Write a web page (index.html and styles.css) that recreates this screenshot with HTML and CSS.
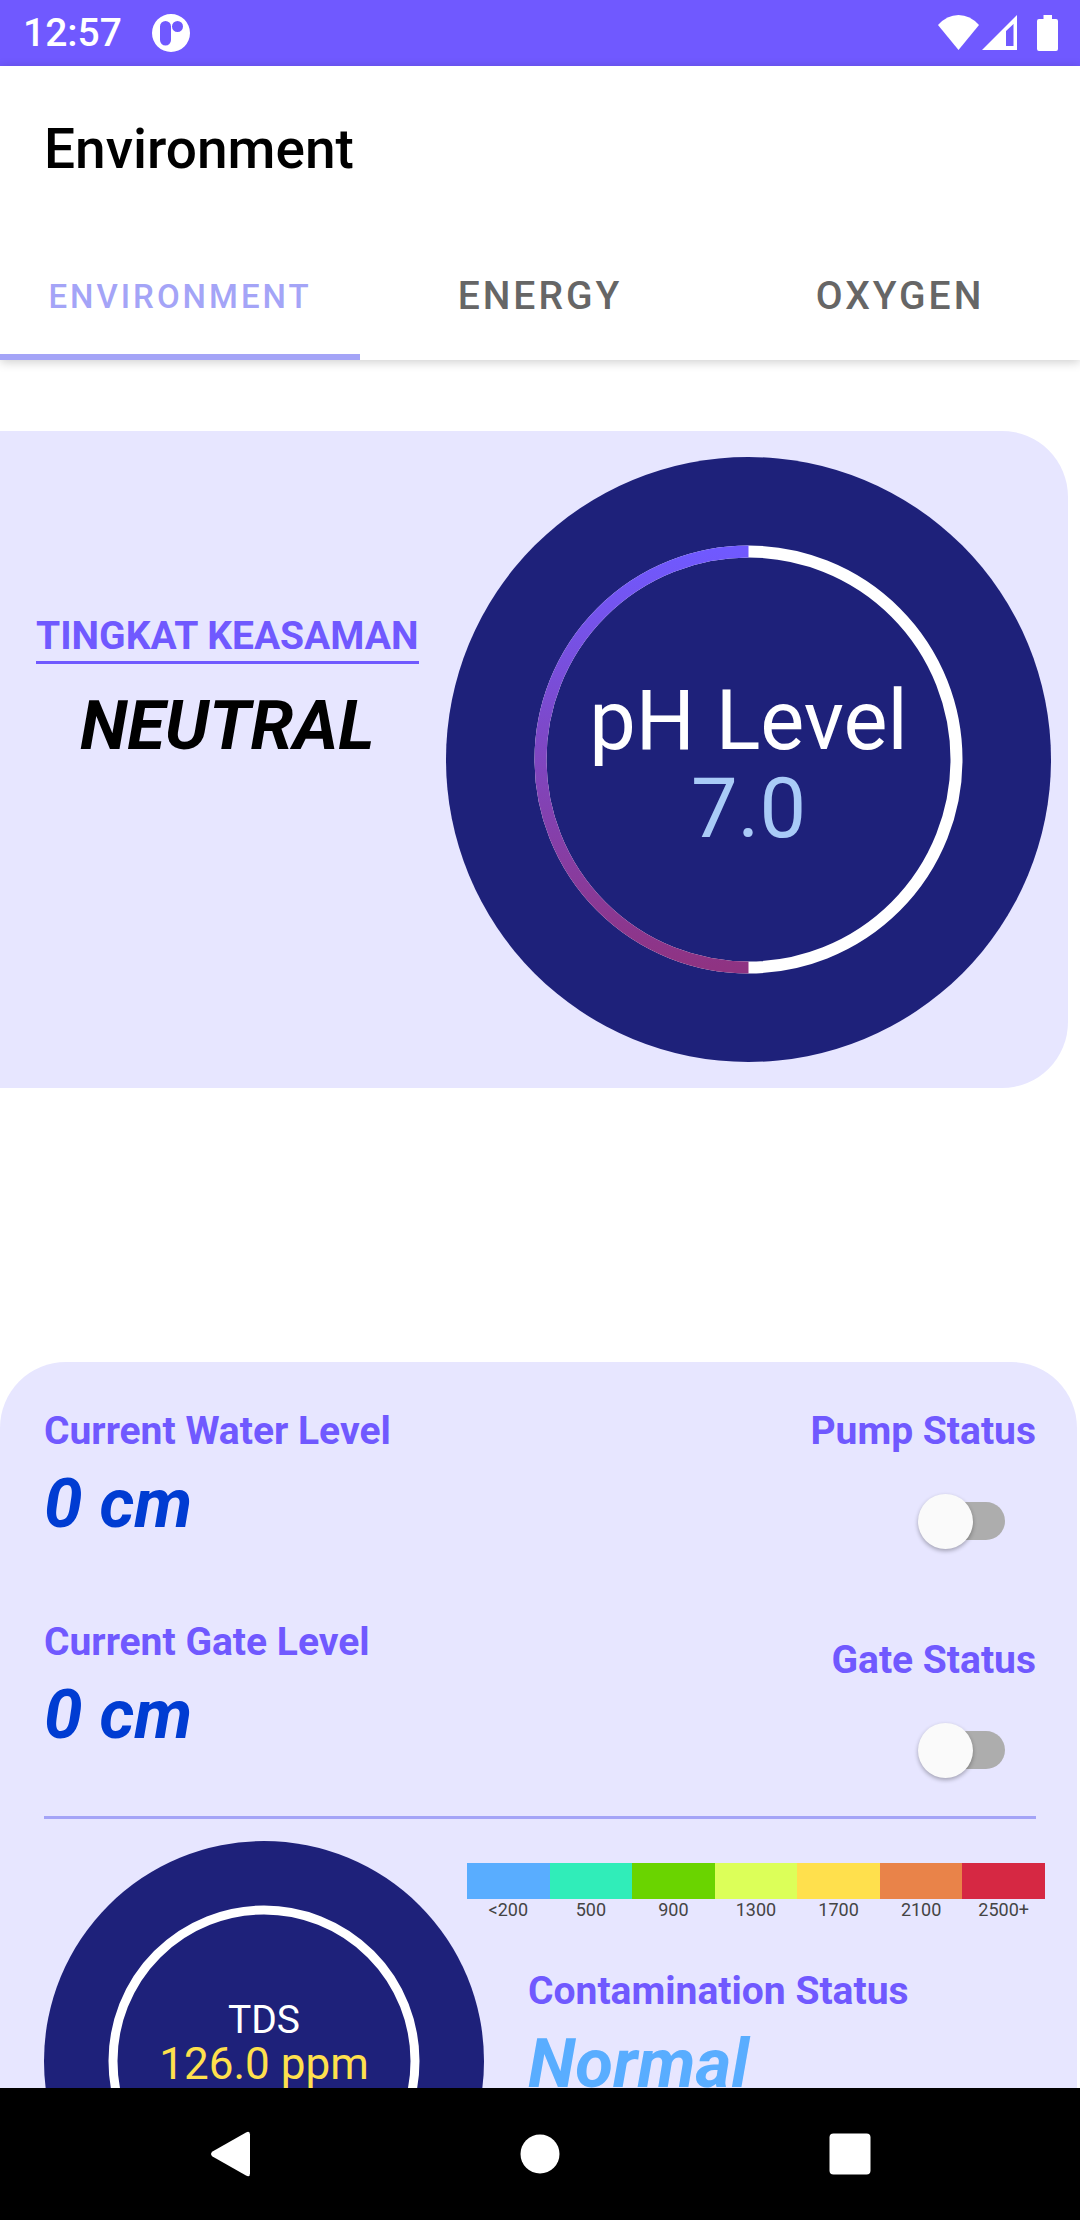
FILE: index.html
```html
<!DOCTYPE html>
<html lang="en">
<head>
  <meta charset="utf-8">
  <meta name="viewport" content="width=device-width, initial-scale=1">
  <title>Environment</title>
  <link rel="stylesheet" href="styles.css">
</head>
<body>
  <div class="screen">
    <div class="status-bar">
      <span class="status-time">12:57</span>
      <svg class="status-app" viewBox="0 0 38 38" aria-hidden="true">
        <path fill="#fff" fill-rule="evenodd" d="M19 0a19 19 0 1 0 0 38a19 19 0 1 0 0-38ZM13.500 7a5.500 5.500 0 0 1 5.500 5.500v13.500a5.500 5.500 0 0 1-11 0v-13.500a5.500 5.500 0 0 1 5.500-5.500ZM25.500 7a5.500 5.500 0 1 0 0 11a5.500 5.500 0 1 0 0-11Z"/>
      </svg>
      <div class="status-icons">
        <svg class="icon-wifi" viewBox="0 0 41 36" aria-hidden="true"><path fill="#fff" d="M0 10Q9 0 20.500 0T41 10L20.500 35Z"/></svg>
        <svg class="icon-signal" viewBox="0 0 35 36" aria-hidden="true"><path fill="#fff" fill-rule="evenodd" d="M35 0V35H0ZM24 16V31H31.500V9Z"/></svg>
        <svg class="icon-battery" viewBox="0 0 21 36" aria-hidden="true"><path fill="#fff" d="M6.500 0h8.500v4h4a2 2 0 0 1 2 2v28a2 2 0 0 1-2 2h-17a2 2 0 0 1-2-2v-28a2 2 0 0 1 2-2h4.500Z"/></svg>
      </div>
    </div>

    <header class="app-header">
      <h1 class="app-title">Environment</h1>
      <nav class="tabs" role="tablist">
        <button class="tab tab-active" type="button" role="tab" aria-selected="true">ENVIRONMENT</button>
        <button class="tab" type="button" role="tab" aria-selected="false">ENERGY</button>
        <button class="tab" type="button" role="tab" aria-selected="false">OXYGEN</button>
      </nav>
    </header>

    <main class="content">
      <section class="card acidity">
        <div class="acidity-info">
          <h2 class="label acidity-label">TINGKAT KEASAMAN</h2>
          <p class="value">NEUTRAL</p>
        </div>
        <div class="gauge gauge-large">
          <svg class="gauge-dial" viewBox="0 0 605 605" aria-hidden="true">
            <defs>
              <linearGradient id="ph-gradient" x1="0" y1="0" x2="0" y2="1">
                <stop offset="0" stop-color="#7059ff"/>
                <stop offset="1" stop-color="#8f3382"/>
              </linearGradient>
            </defs>
            <circle cx="302.500" cy="302.500" r="302.500" fill="#1e217a"/>
            <circle cx="302.500" cy="302.500" r="208" fill="none" stroke="#fff" stroke-width="12"/>
            <path d="M302.500 510.500A208 208 0 0 1 302.500 94.500" fill="none" stroke="url(#ph-gradient)" stroke-width="12"/>
          </svg>
          <div class="gauge-text">
            <span>pH Level</span>
            <span class="ph-value">7.0</span>
          </div>
        </div>
      </section>

      <section class="card water">
        <div class="levels">
          <div class="readings">
            <div class="reading">
              <h2 class="label">Current Water Level</h2>
              <p class="value value-blue">0 cm</p>
            </div>
            <div class="reading">
              <h2 class="label">Current Gate Level</h2>
              <p class="value value-blue">0 cm</p>
            </div>
          </div>
          <div class="controls">
            <div class="control">
              <label class="label" for="pump">Pump Status</label>
              <input class="switch" type="checkbox" role="switch" id="pump">
            </div>
            <div class="control">
              <label class="label" for="gate">Gate Status</label>
              <input class="switch" type="checkbox" role="switch" id="gate">
            </div>
          </div>
        </div>
        <hr class="divider">
        <div class="contamination">
          <div class="gauge gauge-small">
            <svg class="gauge-dial" viewBox="0 0 440 440" aria-hidden="true">
              <circle cx="220" cy="220" r="220" fill="#1e217a"/>
              <circle cx="220" cy="220" r="151" fill="none" stroke="#fff" stroke-width="9"/>
            </svg>
            <div class="gauge-text">
              <span>TDS</span>
              <span class="tds-value">126.0 ppm</span>
            </div>
          </div>
          <div class="contamination-info">
            <ul class="legend">
              <li class="legend-item blue">&lt;200</li>
              <li class="legend-item teal">500</li>
              <li class="legend-item green">900</li>
              <li class="legend-item lime">1300</li>
              <li class="legend-item yellow">1700</li>
              <li class="legend-item orange">2100</li>
              <li class="legend-item red">2500+</li>
            </ul>
            <div class="reading contamination-status">
              <h2 class="label">Contamination Status</h2>
              <p class="value value-normal">Normal</p>
            </div>
          </div>
        </div>
      </section>
    </main>

    <nav class="nav-bar" aria-label="System">
      <button class="nav-button" type="button" aria-label="Back">
        <svg class="nav-icon" viewBox="0 0 48 48"><path fill="#fff" d="M6.500 21.500L40 2.400Q44 0.500 44 4.500V43.500Q44 47.500 40 45.600L6.500 26.500Q3.500 24 6.500 21.500Z"/></svg>
      </button>
      <button class="nav-button" type="button" aria-label="Home">
        <svg class="nav-icon" viewBox="0 0 48 48"><circle cx="24" cy="24" r="19.500" fill="#fff"/></svg>
      </button>
      <button class="nav-button" type="button" aria-label="Recent apps">
        <svg class="nav-icon" viewBox="0 0 48 48"><rect x="3.500" y="3.500" width="41" height="41" rx="4" fill="#fff"/></svg>
      </button>
    </nav>
  </div>
</body>
</html>
```
FILE: styles.css
```css
* {
  box-sizing: border-box;
  margin: 0;
  padding: 0;
}

body {
  background: #fff;
  color: #000;
  font-family: Roboto, "Liberation Sans", sans-serif;
}

button {
  border: 0;
  background: none;
  font-family: inherit;
}

.screen {
  display: flex;
  flex-direction: column;
  height: 100vh;
}

/* System status bar */
.status-bar {
  display: flex;
  flex: none;
  align-items: center;
  height: 66px;
  padding: 0 22px 0 23px;
  background: #7059ff;
}

.status-time {
  color: #fff;
  font-size: 39px;
  font-weight: 500;
  line-height: 46px;
}

.status-app {
  width: 38px;
  height: 38px;
  margin-left: 30px;
}

.status-icons {
  display: flex;
  align-items: center;
  margin-left: auto;
}

.icon-wifi {
  width: 41px;
  height: 36px;
}

.icon-signal {
  width: 35px;
  height: 36px;
  margin: 0 20px 0 3px;
}

.icon-battery {
  width: 21px;
  height: 36px;
}

/* Title and tabs */
.app-header {
  z-index: 1;
  flex: none;
  background: #fff;
  box-shadow: 0 2px 10px rgba(0, 0, 0, 0.2);
}

.app-title {
  padding: 50px 44px;
  font-size: 55px;
  font-weight: 500;
  line-height: 66px;
}

.tabs {
  display: grid;
  grid-template-columns: repeat(3, 1fr);
}

.tab {
  height: 128px;
  border-top: 6px solid transparent;
  border-bottom: 6px solid transparent;
  color: #666;
  font-size: 39px;
  font-weight: 500;
  letter-spacing: 3px;
}

.tab-active {
  border-bottom-color: #a4a4f7;
  color: #a4a4f7;
  font-size: 33px;
}

/* Scrolling content */
.content {
  flex: 1;
  min-height: 0;
  padding-top: 71px;
  overflow: hidden;
}

.card {
  background: #e7e6ff;
}

.label {
  color: #7059ff;
  font-size: 39px;
  font-weight: 700;
  line-height: 46px;
}

.value {
  font-size: 69px;
  font-style: italic;
  font-weight: 700;
  line-height: 80px;
}

.value-blue {
  color: #003cd2;
}

.value-normal {
  color: #59adff;
}

.acidity {
  display: flex;
  align-items: center;
  justify-content: space-between;
  margin-right: 12px;
  padding: 26px 17px 26px 36px;
  border-radius: 0 66px 66px 0;
}

.acidity-info {
  display: flex;
  flex-direction: column;
  gap: 22px;
  align-items: center;
  padding-bottom: 140px;
}

.acidity-label {
  padding-bottom: 2px;
  border-bottom: 3px solid #7059ff;
}

.gauge {
  display: grid;
  flex: none;
  place-items: center;
}

.gauge > * {
  grid-area: 1 / 1;
}

.gauge-dial {
  display: block;
  width: 100%;
}

.gauge-text {
  display: flex;
  flex-direction: column;
  align-items: center;
  color: #fff;
}

.gauge-large {
  width: 605px;
}

.gauge-large .gauge-text {
  padding-top: 10px;
  font-size: 83px;
  line-height: 88px;
}

.ph-value {
  color: #a9cbf7;
}

.gauge-small {
  width: 440px;
}

.gauge-small .gauge-text {
  padding-bottom: 40px;
  font-size: 39px;
  line-height: 46px;
}

.tds-value {
  color: #ffe04d;
  font-size: 44px;
  line-height: 42px;
}

/* Water card */
.water {
  margin: 274px 3px 0 0;
  padding: 46px 41px 44px 44px;
  border-radius: 66px;
}

.levels {
  display: flex;
  justify-content: space-between;
}

.readings {
  display: flex;
  flex-direction: column;
  gap: 75px;
}

.reading {
  display: flex;
  flex-direction: column;
  gap: 10px;
}

.controls {
  display: flex;
  flex-direction: column;
  gap: 88px;
}

.control {
  display: flex;
  flex-direction: column;
  gap: 40px;
  align-items: flex-end;
}

.switch {
  position: relative;
  width: 87px;
  height: 55px;
  margin-right: 31px;
  appearance: none;
}

.switch::before {
  position: absolute;
  inset: 8px 0 9px 10px;
  border-radius: 19px;
  background: #adadad;
  content: "";
}

.switch::after {
  position: absolute;
  top: 0;
  left: 0;
  width: 55px;
  height: 55px;
  border-radius: 50%;
  background: #fafafa;
  box-shadow: 0 2px 4px rgba(0, 0, 0, 0.3);
  content: "";
}

.switch:checked::after {
  right: 0;
  left: auto;
}

.divider {
  height: 3px;
  margin: 38px 0 22px;
  border: 0;
  background: #a4a4f7;
}

.contamination {
  display: flex;
}

.contamination-info {
  flex: 1;
  padding-top: 22px;
}

.legend {
  display: grid;
  grid-template-columns: repeat(7, 1fr);
  margin: 0 -9px 0 -17px;
  list-style: none;
}

.legend-item {
  border-top: 36px solid;
  color: #444;
  font-size: 18px;
  line-height: 22px;
  text-align: center;
}

.blue {
  border-color: #59adff;
}

.teal {
  border-color: #30edb9;
}

.green {
  border-color: #6ad400;
}

.lime {
  border-color: #dcff59;
}

.yellow {
  border-color: #ffe04d;
}

.orange {
  border-color: #e98349;
}

.red {
  border-color: #d62843;
}

.contamination-status {
  padding: 47px 0 0 44px;
}

/* System navigation bar */
.nav-bar {
  display: flex;
  flex: none;
  align-items: center;
  justify-content: center;
  gap: 262px;
  height: 132px;
  background: #000;
}

.nav-button {
  width: 48px;
  height: 48px;
}

.nav-icon {
  display: block;
  width: 48px;
  height: 48px;
}
```
